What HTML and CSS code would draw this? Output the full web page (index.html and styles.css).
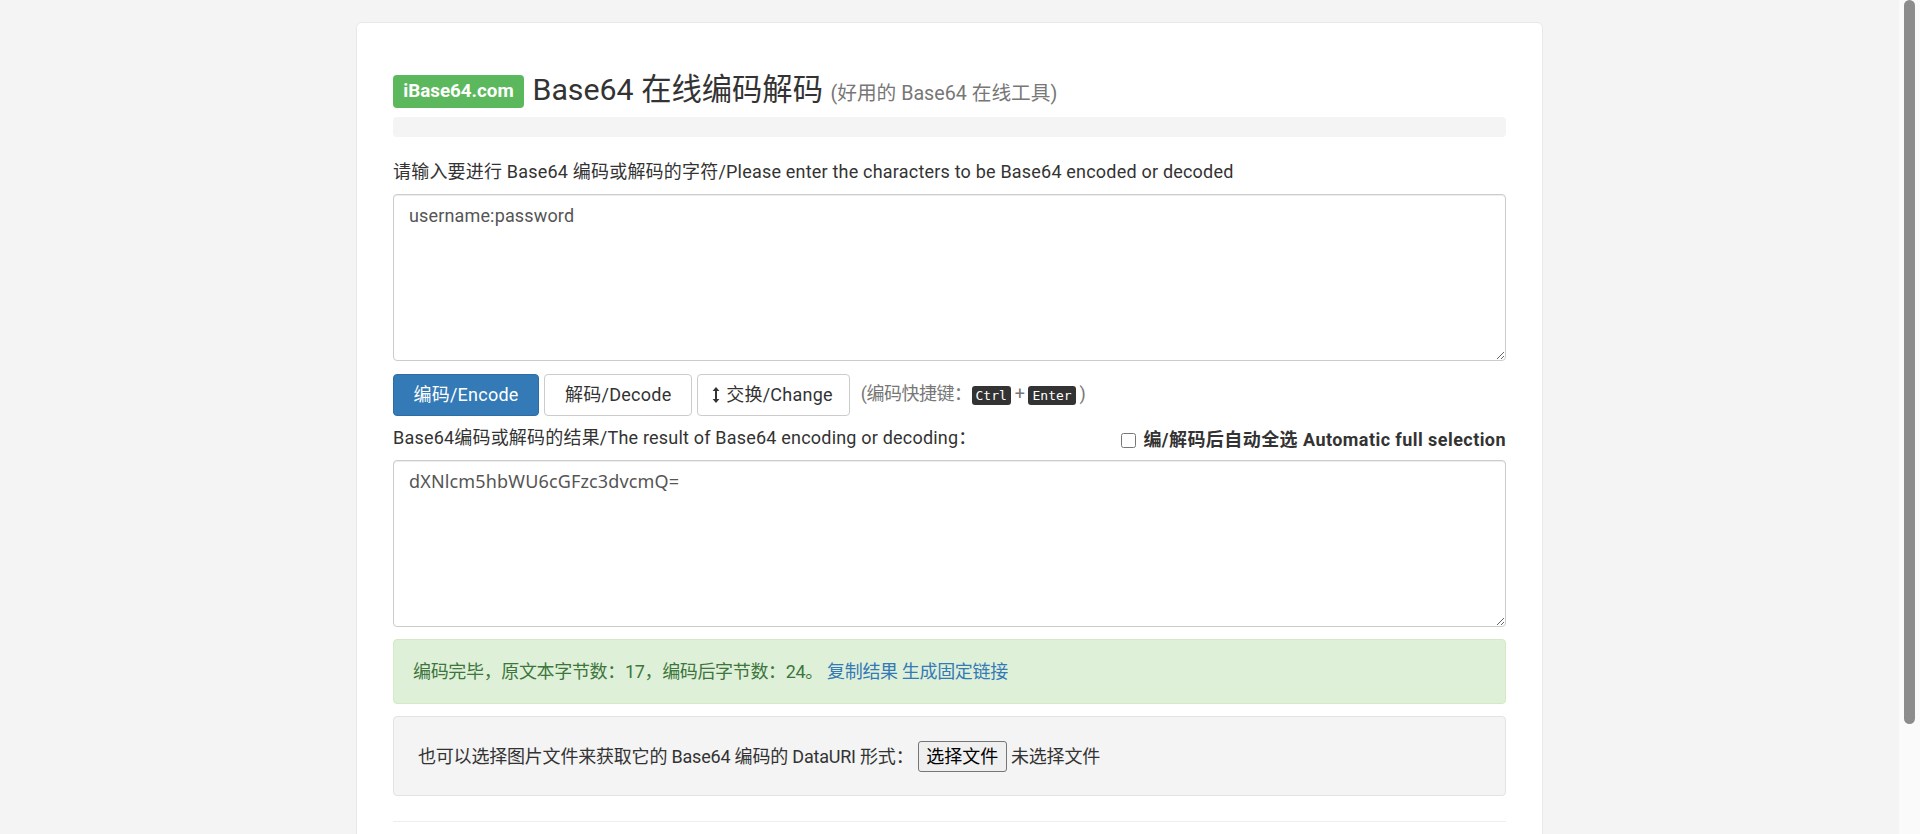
FILE: index.html
```html
<!DOCTYPE html>
<html lang="zh-CN">
<head>
    <meta charset="UTF-8">
    <meta name="viewport" content="width=device-width, initial-scale=1.0">
    <title>Base64 在线编码解码</title>
    <link rel="stylesheet" href="styles.css">
</head>
<body>
    <div class="page">
        <div class="card">
            <h1 class="title">
                <span class="logo">iBase64.com</span>
                Base64 在线编码解码
                <small>(好用的 Base64 在线工具)</small>
            </h1>
            <div class="title-bar"></div>

            <label class="field-label" for="src">请输入要进行 Base64 编码或解码的字符/Please enter the characters to be Base64 encoded or decoded</label>
            <textarea id="src" class="text-box">username:password</textarea>

            <div class="actions">
                <button class="btn btn-primary">编码/Encode</button>
                <button class="btn">解码/Decode</button>
                <button class="btn btn-swap">
                    <svg class="swap-icon" viewBox="0 0 10 18" width="10" height="18"><path d="M5 1 8.4 5H6v8h2.4L5 17 1.6 13H4V5H1.6z"/></svg>
                    交换/Change
                </button>
                <span class="hint">(编码快捷键：<kbd>Ctrl</kbd> + <kbd>Enter</kbd> )</span>
            </div>

            <div class="result-head">
                <label class="field-label" for="dst">Base64编码或解码的结果/The result of Base64 encoding or decoding：</label>
                <label class="auto-select"><input type="checkbox"> 编/解码后自动全选 Automatic full selection</label>
            </div>
            <textarea id="dst" class="text-box text-box-code">dXNlcm5hbWU6cGFzc3dvcmQ=</textarea>

            <div class="alert">编码完毕，原文本字节数：17，编码后字节数：24。 <a href="#">复制结果</a> <a href="#">生成固定链接</a></div>

            <div class="well">
                也可以选择图片文件来获取它的 Base64 编码的 DataURI 形式：
                <button class="file-btn">选择文件</button>
                未选择文件
            </div>

            <hr class="divider">
        </div>
    </div>
    <div class="scrollbar"><div class="scrollbar-thumb"></div></div>
</body>
</html>
```

FILE: styles.css
```css
* {
    box-sizing: border-box;
}
html, body {
    height: 100%;
}
body {
    margin: 0;
    display: flex;
    overflow: hidden;
    background-color: #f4f4f4;
    color: #333;
    font-family: Roboto, "Noto Sans CJK SC", sans-serif;
    font-size: 18px;
    line-height: 24px;
}
.page {
    flex: 1;
    padding: 22px 0 0 356px;
}
.card {
    width: 1187px;
    height: 900px;
    padding: 47px 36px 0;
    background-color: #fff;
    border: 1px solid #e8e8e8;
    border-radius: 6px;
}
.title {
    margin: 0;
    height: 47px;
    color: #333;
    font-size: 30.3px;
    font-weight: 400;
    line-height: 40px;
    white-space: nowrap;
}
.title small {
    color: #777;
    font-size: 19.7px;
}
.logo {
    display: inline-block;
    width: 131px;
    height: 33px;
    margin-right: 1px;
    background-color: #5cb85c;
    border-radius: 4px;
    color: #fff;
    font-size: 18.8px;
    font-weight: 700;
    line-height: 33px;
    text-align: center;
    vertical-align: 3px;
}
.title-bar {
    height: 20px;
    background-color: #f4f4f4;
    border-radius: 4px;
}
.field-label {
    display: block;
    letter-spacing: 0.2px;
    white-space: nowrap;
}
.title-bar + .field-label {
    margin: 23px 0 10px;
}
.text-box {
    display: block;
    width: 100%;
    height: 167px;
    padding: 9px 15px 8px;
    border: 1px solid #ccc;
    border-radius: 4px;
    box-shadow: inset 0 1px 1px rgba(0, 0, 0, 0.075);
    color: #555;
    font: inherit;
    letter-spacing: 0.15px;
}
.text-box-code {
    padding-top: 8px;
    font-family: "Noto Sans", "Noto Sans CJK SC", sans-serif;
}
.actions {
    display: flex;
    align-items: center;
    gap: 5px;
    margin-top: 13px;
}
.btn {
    height: 42px;
    padding: 0 20px;
    background-color: #fff;
    border: 1px solid #ccc;
    border-radius: 4px;
    color: #333;
    font: inherit;
    letter-spacing: 0.25px;
    white-space: nowrap;
}
.btn-primary {
    padding: 0 19.4px;
    background-color: #337ab7;
    border-color: #2e6da4;
    color: #fff;
}
.btn-swap {
    padding: 0 16px 0 13px;
}
.swap-icon {
    fill: #333;
    vertical-align: -3px;
}
.hint {
    margin-left: 6px;
    color: #777;
    letter-spacing: -0.5px;
}
kbd {
    padding: 2px 4px;
    background-color: #333;
    border-radius: 3px;
    color: #fff;
    font-family: "DejaVu Sans Mono", monospace;
    font-size: 13px;
    letter-spacing: 0;
}
.result-head {
    display: flex;
    justify-content: space-between;
    align-items: center;
    height: 44px;
    padding-top: 2px;
}
.result-head .field-label {
    margin-top: -2px;
}
.auto-select {
    margin-top: 1px;
    font-weight: 700;
    letter-spacing: 0.44px;
    white-space: nowrap;
}
.auto-select input {
    width: 15px;
    height: 15px;
    margin: 0 2px 0 0;
    vertical-align: -2px;
}
.alert {
    height: 65px;
    margin-top: 12px;
    padding: 20px 19px;
    background-color: #dff0d8;
    border: 1px solid #d6e9c6;
    border-radius: 4px;
    color: #3c763d;
    letter-spacing: -0.34px;
}
.alert a {
    color: #337ab7;
    text-decoration: none;
}
.well {
    height: 80px;
    margin-top: 12px;
    padding: 24px 24px 22px;
    background-color: #f4f4f4;
    border: 1px solid #e3e3e3;
    border-radius: 4px;
    letter-spacing: -0.2px;
}
.file-btn {
    height: 31px;
    padding: 0 7.5px;
    background-color: #efefef;
    border: 1px solid #767676;
    border-radius: 3px;
    color: #000;
    font: inherit;
}
.divider {
    margin: 25px 0 0;
    border: 0;
    border-top: 1px solid #eee;
}
.scrollbar {
    flex: none;
    width: 21px;
    padding: 0 5px;
    background-color: #fafafa;
}
.scrollbar-thumb {
    height: 724px;
    background-color: #8c8c8c;
    border-radius: 6px;
}
```
